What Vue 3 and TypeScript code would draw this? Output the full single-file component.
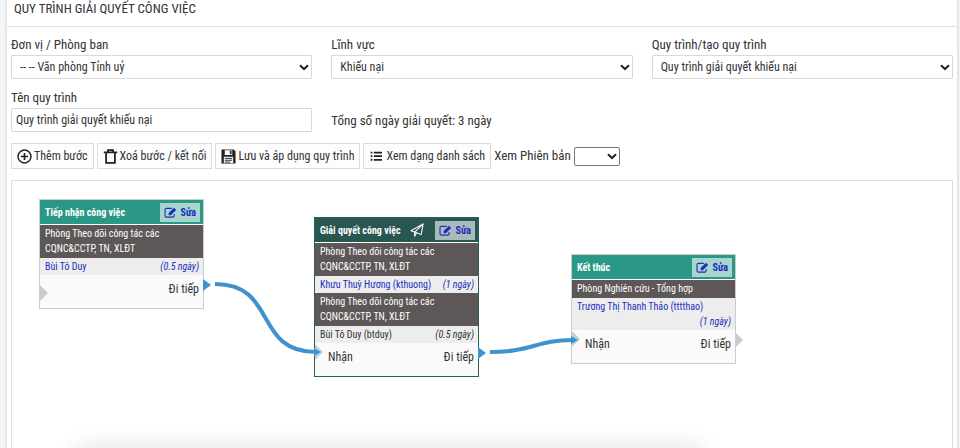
<script setup lang="ts">
import { ref } from 'vue'

interface Assignment {
  unit: string
  person: string
  days: string
  plain?: boolean
}

interface Step {
  id: number
  title: string
  x: number
  y: number
  active?: boolean
  input?: string
  output: string
  inputLinked?: boolean
  outputLinked?: boolean
  assignments: Assignment[]
}

const unit = ref('vptu')
const field = ref('kn')
const process = ref('gqkn')
const version = ref('')
const processName = ref('Quy trình giải quyết khiếu nại')

const steps: Step[] = [
  {
    id: 1, title: 'Tiếp nhận công việc', x: 27, y: 18, output: 'Đi tiếp', outputLinked: true,
    assignments: [
      { unit: 'Phòng Theo dõi công tác các CQNC&CCTP, TN, XLĐT', person: 'Bùi Tô Duy', days: '(0.5 ngày)' },
    ],
  },
  {
    id: 2, title: 'Giải quyết công việc', x: 302, y: 36, active: true, input: 'Nhận', output: 'Đi tiếp', inputLinked: true, outputLinked: true,
    assignments: [
      { unit: 'Phòng Theo dõi công tác các CQNC&CCTP, TN, XLĐT', person: 'Khưu Thuỳ Hương (kthuong)', days: '(1 ngày)' },
      { unit: 'Phòng Theo dõi công tác các CQNC&CCTP, TN, XLĐT', person: 'Bùi Tô Duy (btduy)', days: '(0.5 ngày)', plain: true },
    ],
  },
  {
    id: 3, title: 'Kết thúc', x: 559, y: 73, input: 'Nhận', output: 'Đi tiếp', inputLinked: true,
    assignments: [
      { unit: 'Phòng Nghiên cứu - Tổng hợp', person: 'Trương Thị Thanh Thảo (tttthao)', days: '(1 ngày)' },
    ],
  },
]
</script>

<template>
  <main class="panel">
    <header class="panel-head"><h1>QUY TRÌNH GIẢI QUYẾT CÔNG VIỆC</h1></header>
    <div class="panel-body">
      <form class="fields" @submit.prevent>
        <div class="field">
          <label for="unit">Đơn vị / Phòng ban</label>
          <div class="select">
            <select id="unit" v-model="unit"><option value="vptu">-- -- Văn phòng Tỉnh uỷ</option></select>
            <svg class="chevron" viewBox="0 0 10 7"><path d="M1 1.2 5 5 9 1.2" /></svg>
          </div>
        </div>
        <div class="field">
          <label for="field">Lĩnh vực</label>
          <div class="select">
            <select id="field" v-model="field"><option value="kn">Khiếu nại</option></select>
            <svg class="chevron" viewBox="0 0 10 7"><path d="M1 1.2 5 5 9 1.2" /></svg>
          </div>
        </div>
        <div class="field">
          <label for="process">Quy trình/tạo quy trình</label>
          <div class="select">
            <select id="process" v-model="process"><option value="gqkn">Quy trình giải quyết khiếu nại</option></select>
            <svg class="chevron" viewBox="0 0 10 7"><path d="M1 1.2 5 5 9 1.2" /></svg>
          </div>
        </div>
        <div class="field">
          <label for="name">Tên quy trình</label>
          <input id="name" v-model="processName" type="text">
        </div>
        <p class="total">Tổng số ngày giải quyết: 3 ngày</p>
      </form>

      <div class="toolbar">
        <button type="button">
          <svg class="icon" viewBox="0 0 16 16"><circle cx="8" cy="8" r="6.9" fill="none" stroke="currentColor" stroke-width="1.6" /><path d="M8 4.200v7.600M4.200 8h7.600" fill="none" stroke="currentColor" stroke-width="1.800" /></svg>
          <span>Thêm bước</span>
        </button>
        <button type="button">
          <svg class="icon" viewBox="0 0 16 16"><path d="M.8 3.600h14.400M5.300 3.200V1.200h5.400v2M3.300 4v10.800h9.400V4" fill="none" stroke="currentColor" stroke-width="1.900" /></svg>
          <span>Xoá bước / kết nối</span>
        </button>
        <button type="button">
          <svg class="icon" viewBox="0 0 16 16"><path fill="currentColor" fill-rule="evenodd" d="M.5.5H13.500L15.500 2.500v13H.5V.5ZM4 1.300v5.100h8V1.300H4Zm5.400.6h1.800v3.800H9.400ZM3 8.200v6.600h10V8.200Z" /><path d="M4 10h8M4 12h8M4 14h6" stroke="currentColor" stroke-width="1" /></svg>
          <span>Lưu và áp dụng quy trình</span>
        </button>
        <button type="button">
          <svg class="icon list" viewBox="0 0 14 14"><path d="M4.500 3H14M4.500 7.200H14M4.500 11.400H14" fill="none" stroke="currentColor" stroke-width="2" /><path d="M.8 3h2M.8 7.200h2M.8 11.400h2" stroke="currentColor" stroke-width="2.200" /></svg>
          <span>Xem dạng danh sách</span>
        </button>
        <label for="version">Xem Phiên bản</label>
        <div class="select version">
          <select id="version" v-model="version"><option value=""></option></select>
          <svg class="chevron" viewBox="0 0 10 7"><path d="M1 1.2 5 5 9 1.2" /></svg>
        </div>
      </div>

      <section class="canvas">
        <article
          v-for="s in steps" :key="s.id" class="step" :class="{ active: s.active }"
          :style="{ left: s.x + 'px', top: s.y + 'px' }"
        >
          <header class="step-head">
            <h2>{{ s.title }}</h2>
            <svg v-if="s.active" class="plane" viewBox="0 0 16 16"><path d="M1 8.800 15 1 12.700 13.300 7.500 11.200ZM15 1 5.300 10.300V15L7.500 11.200" /></svg>
            <button type="button" class="edit">
              <svg viewBox="0 0 14 12"><path d="M8.500 1.500H2.500A1.500 1.500 0 0 0 1 3v6.500A1.500 1.500 0 0 0 2.500 11h7A1.500 1.500 0 0 0 11 9.500V7.500" fill="none" stroke="currentColor" stroke-width="1.200" /><path d="M5 6.600 10.800.8 13.200 3.200 7.400 9H5Z" fill="currentColor" /></svg>
              <span>Sửa</span>
            </button>
          </header>
          <template v-for="(a, i) in s.assignments" :key="i">
            <div class="unit">{{ a.unit }}</div>
            <div class="person" :class="{ plain: a.plain }">
              <span>{{ a.person }}</span><em>{{ a.days }}</em>
            </div>
          </template>
          <footer class="ports">
            <span class="port in" :class="{ linked: s.inputLinked }"></span>
            <span class="in-label">{{ s.input }}</span>
            <span>{{ s.output }}</span>
            <span class="port out" :class="{ linked: s.outputLinked }"></span>
          </footer>
        </article>
        <svg class="links" width="941" height="268">
          <path d="M203 103C266 103 241 171 304 171" />
          <path d="M478 171C520 171 524 159 561 159" />
          <path class="tip" d="M302 167 309 171 302 175ZM559 155 566 159 559 163Z" />
        </svg>
      </section>
    </div>
    <div class="dock-shadow"></div>
  </main>
</template>

<style>
body {
  background: #f5f5f5;
}
</style>

<style scoped>
* {
  box-sizing: border-box;
}

.panel {
  display: flex;
  flex-direction: column;
  min-height: 100vh;
  margin: 0 1px 0 5px;
  border: solid #e6e6e6;
  border-width: 0 2px;
  background: #fff;
  color: #333;
  font: 12px/16px "Roboto Condensed", "Liberation Sans Narrow", Roboto, sans-serif;
  overflow: hidden;
}

.panel-head {
  padding: 0 7px 8px;
  border-bottom: 1px solid #e2e2e2;
}

h1 {
  margin: 0;
  font-size: 13px;
  font-weight: 400;
  line-height: 18px;
}

.panel-body {
  display: flex;
  flex: 1;
  flex-direction: column;
  padding: 10px 4px 0;
}

.fields {
  display: grid;
  grid-template-columns: repeat(3, minmax(0, 1fr));
  gap: 11px 19px;
}

.field {
  display: flex;
  flex-direction: column;
  gap: 2px;
}

label,
.total {
  font-size: 13px;
}

.total {
  align-self: end;
  margin: 0 0 3px;
}

.select {
  position: relative;
}

select,
input {
  display: block;
  width: 100%;
  height: 24px;
  margin: 0;
  padding: 0 8px;
  border: 1px solid #d9d9d9;
  border-radius: 1px;
  background: #fff;
  color: #333;
  font: inherit;
  font-size: 12px;
  appearance: none;
}

input {
  padding: 0 4px;
}

.chevron {
  position: absolute;
  right: 3px;
  top: 50%;
  width: 10px;
  height: 7px;
  margin-top: -3px;
  fill: none;
  stroke: #222;
  stroke-width: 2;
  pointer-events: none;
}

.toolbar {
  display: flex;
  align-items: center;
  gap: 3px;
  margin: 11px 0;
  white-space: nowrap;
}

.toolbar button {
  display: flex;
  align-items: center;
  gap: 2px;
  height: 26px;
  padding: 0 5px;
  border: 1px solid #ddd;
  background: #fdfdfd;
  color: #333;
  font: inherit;
}

.icon {
  flex: none;
  width: 15px;
  height: 15px;
  color: #222;
}

.icon.list {
  width: 12px;
  height: 12px;
  margin: 0 2px 0 1px;
}

.version {
  width: 46px;
}

.version select {
  height: 19px;
  border-color: #767676;
  border-radius: 2px;
}

.canvas {
  position: relative;
  flex: 1;
  border: 1px solid #ddd;
  border-bottom: 0;
}

.links {
  position: absolute;
  left: 0;
  top: 0;
  fill: none;
  stroke: #3f93cc;
  stroke-width: 4;
  pointer-events: none;
}

.links .tip {
  fill: #3f93cc;
  stroke: none;
}

.step {
  position: absolute;
  width: 165px;
  border: 1px solid #ccc;
  background: #fafafa;
  font-size: 10px;
  line-height: 15px;
}

.step.active {
  border-color: #2b5f5a;
}

.step-head {
  display: flex;
  align-items: center;
  height: 25px;
  padding: 0 3px 0 5px;
  border-bottom: 1px solid #fff;
  background: #2a9787;
  color: #fff;
}

.active .step-head {
  background: #285650;
}

h2 {
  margin: 0;
  font-size: 10px;
  font-weight: 700;
}

.plane {
  width: 14px;
  height: 14px;
  margin-left: 9px;
  fill: none;
  stroke: #fff;
  stroke-width: 1.2;
  stroke-linejoin: round;
}

.edit {
  display: flex;
  align-items: center;
  gap: 3px;
  height: 19px;
  margin-left: auto;
  padding: 0 4px;
  border: 0;
  background: #a9d5cf;
  color: #1c2fbd;
  font: inherit;
  font-weight: 700;
}

.active .edit {
  background: #a9bbb9;
}

.edit svg {
  width: 13px;
  height: 11px;
}

.unit {
  padding: 1px 4px 2px 5px;
  background: #5d5857;
  color: #fff;
}

.person {
  display: flex;
  flex-wrap: wrap;
  justify-content: space-between;
  padding: 1px 4px 1px 5px;
  background: #ededee;
  color: #1c2fbd;
}

.person.plain {
  color: #333;
}

.person em {
  margin-left: auto;
}

.ports {
  position: relative;
  display: flex;
  justify-content: space-between;
  padding: 7px 4px 11px;
  font-size: 12px;
}

.in-label {
  padding-left: 9px;
}

.port {
  position: absolute;
  top: 2px;
  width: 8px;
  height: 16px;
  background: #ccc;
  clip-path: polygon(0 0, 100% 50%, 0 100%);
}

.port.in {
  left: 0;
  top: 10px;
}

.port.in.linked {
  top: 1px;
  background: #b9d3e2;
}

.port.out {
  left: 100%;
}

.port.out.linked {
  top: 4px;
  height: 12px;
  background: #3f93cc;
}

.dock-shadow {
  position: fixed;
  top: 100%;
  left: 8%;
  right: 27%;
  height: 40px;
  box-shadow: 0 0 24px #0002;
}
</style>
